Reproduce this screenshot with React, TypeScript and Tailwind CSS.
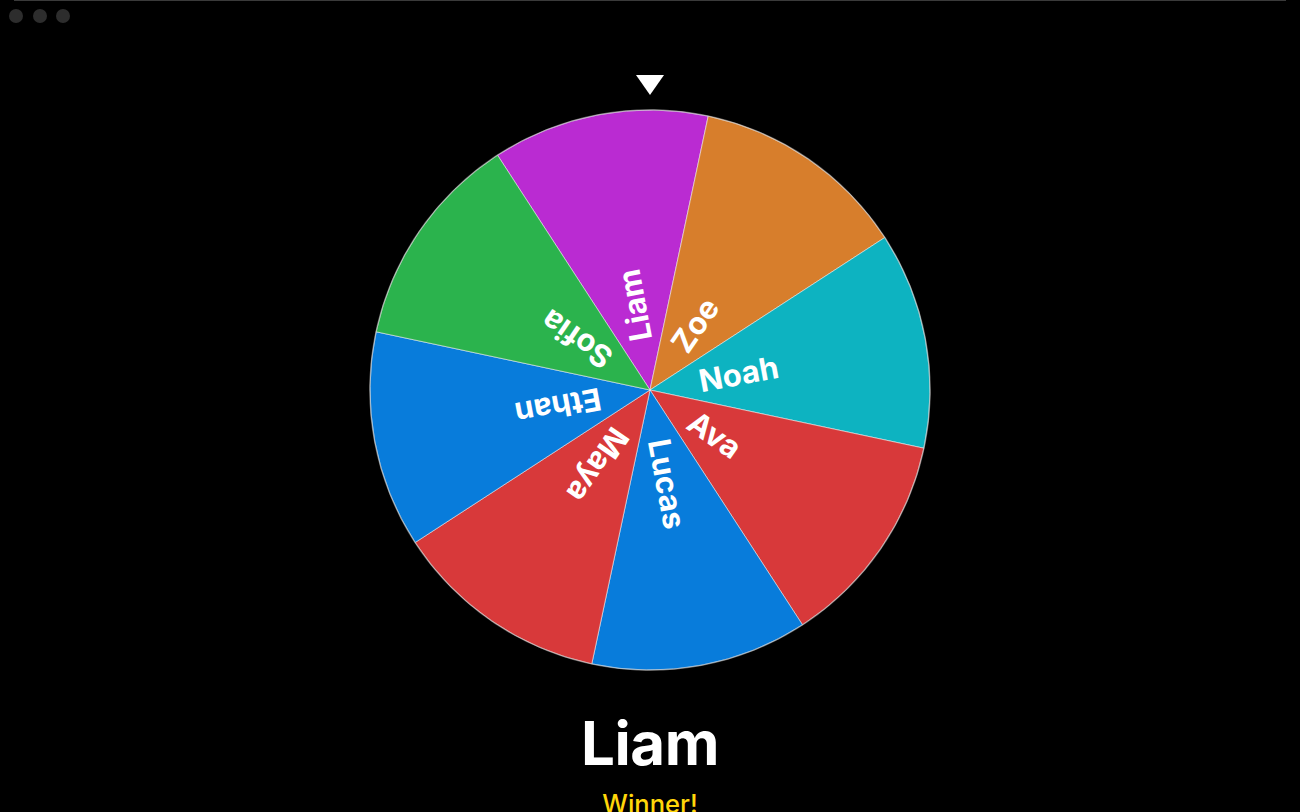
import React from 'react';

const SEGMENTS = [
  { name: 'Liam', color: '#BA2BD2' },
  { name: 'Zoe', color: '#D77E2C' },
  { name: 'Noah', color: '#0DB3C1' },
  { name: 'Ava', color: '#D8393A' },
  { name: 'Lucas', color: '#087CDB' },
  { name: 'Maya', color: '#D8393A' },
  { name: 'Ethan', color: '#087CDB' },
  { name: 'Sofia', color: '#2BB34D' },
];

const SIZE = 562;
const C = SIZE / 2;
const R = 280;
const OFFSET = -33; // wheel rotation, degrees from north

function point(deg: number, r: number) {
  const a = (deg * Math.PI) / 180;
  return [C + r * Math.sin(a), C - r * Math.cos(a)];
}

function Wheel() {
  const step = 360 / SEGMENTS.length;
  return (
    <svg width={SIZE} height={SIZE} viewBox={`0 0 ${SIZE} ${SIZE}`}>
      {SEGMENTS.map((s, i) => {
        const start = OFFSET + i * step;
        const end = start + step;
        const [x1, y1] = point(start, R);
        const [x2, y2] = point(end, R);
        return (
          <path
            key={s.name}
            d={`M ${C} ${C} L ${x1} ${y1} A ${R} ${R} 0 0 1 ${x2} ${y2} Z`}
            fill={s.color}
            stroke="rgba(255,255,255,0.55)"
            strokeWidth={1}
          />
        );
      })}
      <circle cx={C} cy={C} r={R} fill="none" stroke="rgba(200,200,200,0.5)" strokeWidth={1.5} />
      {SEGMENTS.map((s, i) => {
        const mid = OFFSET + i * step + step / 2;
        return (
          <text
            key={s.name + '-t'}
            x={C + 50}
            y={C}
            transform={`rotate(${mid - 90} ${C} ${C})`}
            dominantBaseline="central"
            fill="#fff"
            fontSize={31}
            fontWeight={700}
            fontFamily="Inter, 'Liberation Sans', sans-serif"
          >
            {s.name}
          </text>
        );
      })}
    </svg>
  );
}

export default function App() {
  return (
    <div className="w-[1300px] h-[812px] overflow-hidden bg-black relative" style={{ fontFamily: "Inter, 'Liberation Sans', sans-serif" }}>
      {/* window chrome */}
      <div className="mx-[14px] h-px bg-[#3a3a3a]" />
      <div className="flex gap-[9.5px] pl-[9px] pt-[8px]">
        <span className="w-[14px] h-[14px] rounded-full bg-[#2d2d2d]" />
        <span className="w-[14px] h-[14px] rounded-full bg-[#2d2d2d]" />
        <span className="w-[14px] h-[14px] rounded-full bg-[#2d2d2d]" />
      </div>

      <div className="flex flex-col items-center pt-[52px]">
        <svg width="28" height="20" viewBox="0 0 28 20">
          <polygon points="0,0 28,0 14,20" fill="#fff" />
        </svg>
        <div className="mt-[14px]">
          <Wheel />
        </div>
        <div className="mt-[42px] text-[60px] leading-none font-bold text-white tracking-[-0.5px]">Liam</div>
        <div className="mt-[18px] text-[25.5px] leading-none font-medium text-[#FFD60A]">Winner!</div>
      </div>
    </div>
  );
}
